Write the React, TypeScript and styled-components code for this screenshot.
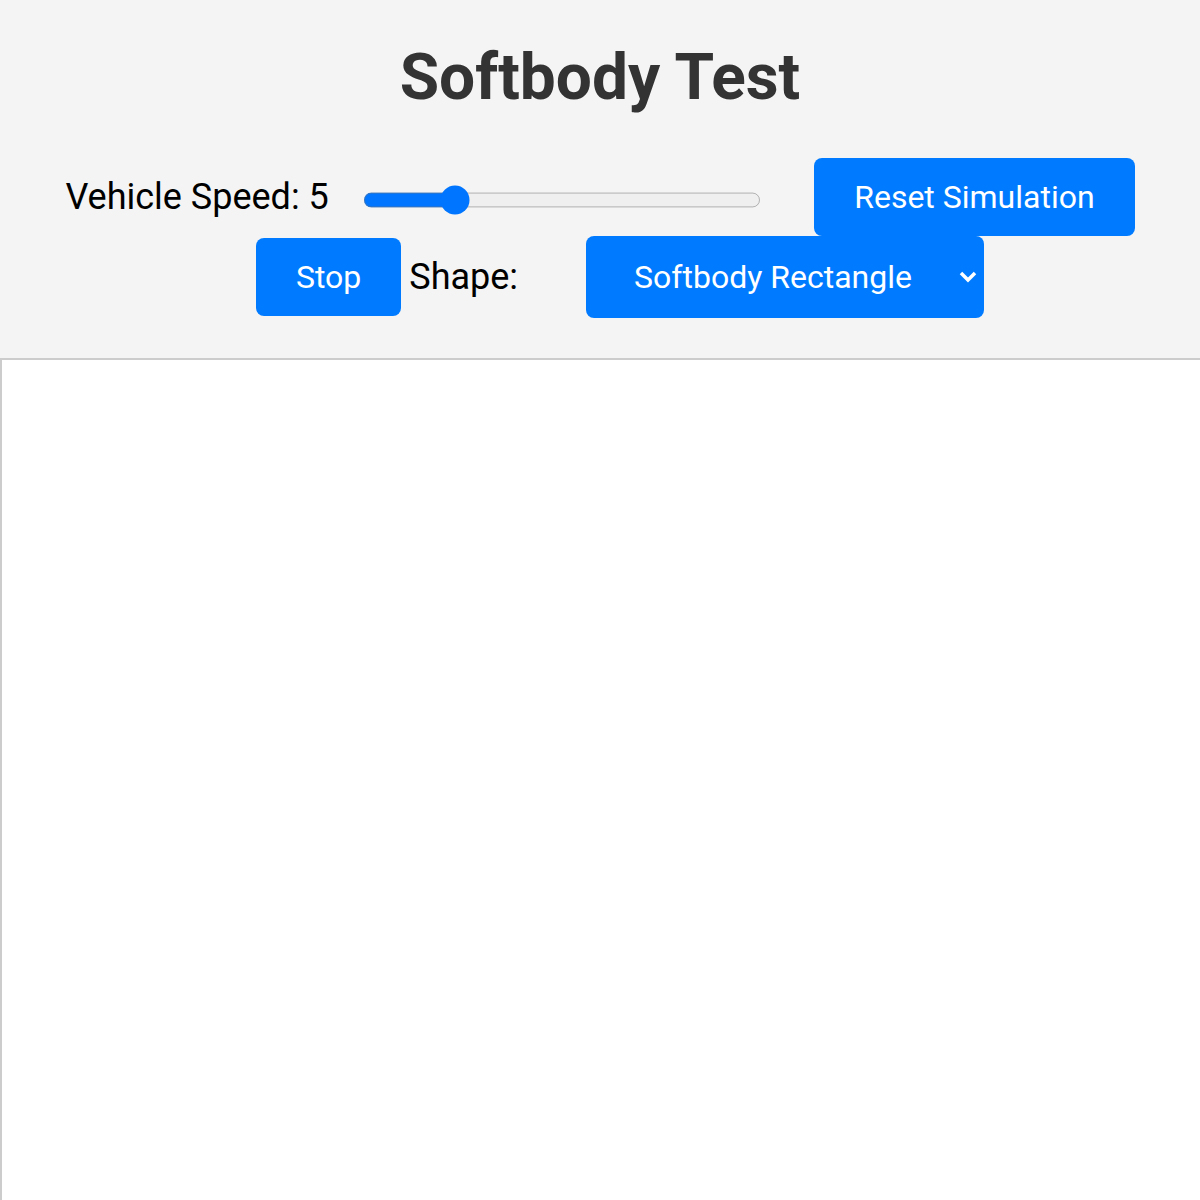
import React, { useState } from 'react';
import styled, { createGlobalStyle } from 'styled-components';

const GlobalStyle = createGlobalStyle`
  html, body {
    margin: 0;
    padding: 0;
    overflow: hidden;
    background: #fff;
    font-family: Roboto, 'Liberation Sans', sans-serif;
  }
`;

const Header = styled.header`
  background-color: #f4f4f4;
  padding: 39px 0 40px;
  text-align: center;
`;

const Title = styled.h1`
  margin: 0 0 41px;
  font-size: 64px;
  font-weight: 700;
  line-height: 78px;
  color: #333;
`;

const Controls = styled.div`
  display: flex;
  flex-wrap: wrap;
  justify-content: center;
  align-items: center;
`;

const Label = styled.label<{ $gapLeft?: number; $gapRight?: number }>`
  font-size: 36px;
  color: #000;
  margin-left: ${(p) => p.$gapLeft ?? 0}px;
  margin-right: ${(p) => p.$gapRight ?? 0}px;
`;

const Slider = styled.input`
  accent-color: #0075ff;
  zoom: 1.85;
  width: 215px;
  margin: 3px 29px 0 0;
`;

const Button = styled.button<{ $gapLeft?: number }>`
  height: 78px;
  padding: 0 40px;
  margin-left: ${(p) => p.$gapLeft ?? 0}px;
  border: none;
  border-radius: 8px;
  background-color: #007bff;
  color: #fff;
  font-family: Roboto, 'Liberation Sans', sans-serif;
  font-size: 32px;
  cursor: pointer;
`;

const SelectWrap = styled.div`
  position: relative;
  display: flex;
`;

const Select = styled.select`
  appearance: none;
  -webkit-appearance: none;
  width: 398px;
  height: 82px;
  padding: 0 0 0 48px;
  border: none;
  border-radius: 8px;
  background-color: #007bff;
  color: #fff;
  font-family: Roboto, 'Liberation Sans', sans-serif;
  font-size: 32px;
  cursor: pointer;
`;

const Chevron = styled.svg`
  position: absolute;
  right: 7px;
  top: 35px;
  width: 18px;
  height: 12px;
  pointer-events: none;
`;

const Canvas = styled.canvas`
  display: block;
  width: 1200px;
  height: 840px;
  border: 2px solid #ccc;
  background: #fff;
`;

const shapes = ['Softbody Rectangle', 'Softbody Circle', 'Rigid Box'];

const App = () => {
  const [speed, setSpeed] = useState(5);
  const [running, setRunning] = useState(true);
  const [shape, setShape] = useState(shapes[0]);

  return (
    <>
      <GlobalStyle />
      <Header>
        <Title>Softbody Test</Title>
        <Controls>
          <Label htmlFor="speed" $gapRight={34}>
            Vehicle Speed: {speed}
          </Label>
          <Slider
            id="speed"
            type="range"
            min="1"
            max="20"
            value={speed}
            onChange={(e) => setSpeed(parseInt(e.target.value, 10))}
          />
          <Button>Reset Simulation</Button>
          <Button $gapLeft={40} onClick={() => setRunning(!running)}>
            {running ? 'Stop' : 'Start'}
          </Button>
          <Label htmlFor="shape" $gapLeft={8} $gapRight={68}>
            Shape:
          </Label>
          <SelectWrap>
            <Select id="shape" value={shape} onChange={(e) => setShape(e.target.value)}>
              {shapes.map((s) => (
                <option key={s} value={s}>
                  {s}
                </option>
              ))}
            </Select>
            <Chevron viewBox="0 0 18 12">
              <path d="M2 2l7 7 7-7" fill="none" stroke="#fff" strokeWidth="3.5" />
            </Chevron>
          </SelectWrap>
        </Controls>
      </Header>
      <Canvas width={1200} height={840} />
    </>
  );
};

export default App;
